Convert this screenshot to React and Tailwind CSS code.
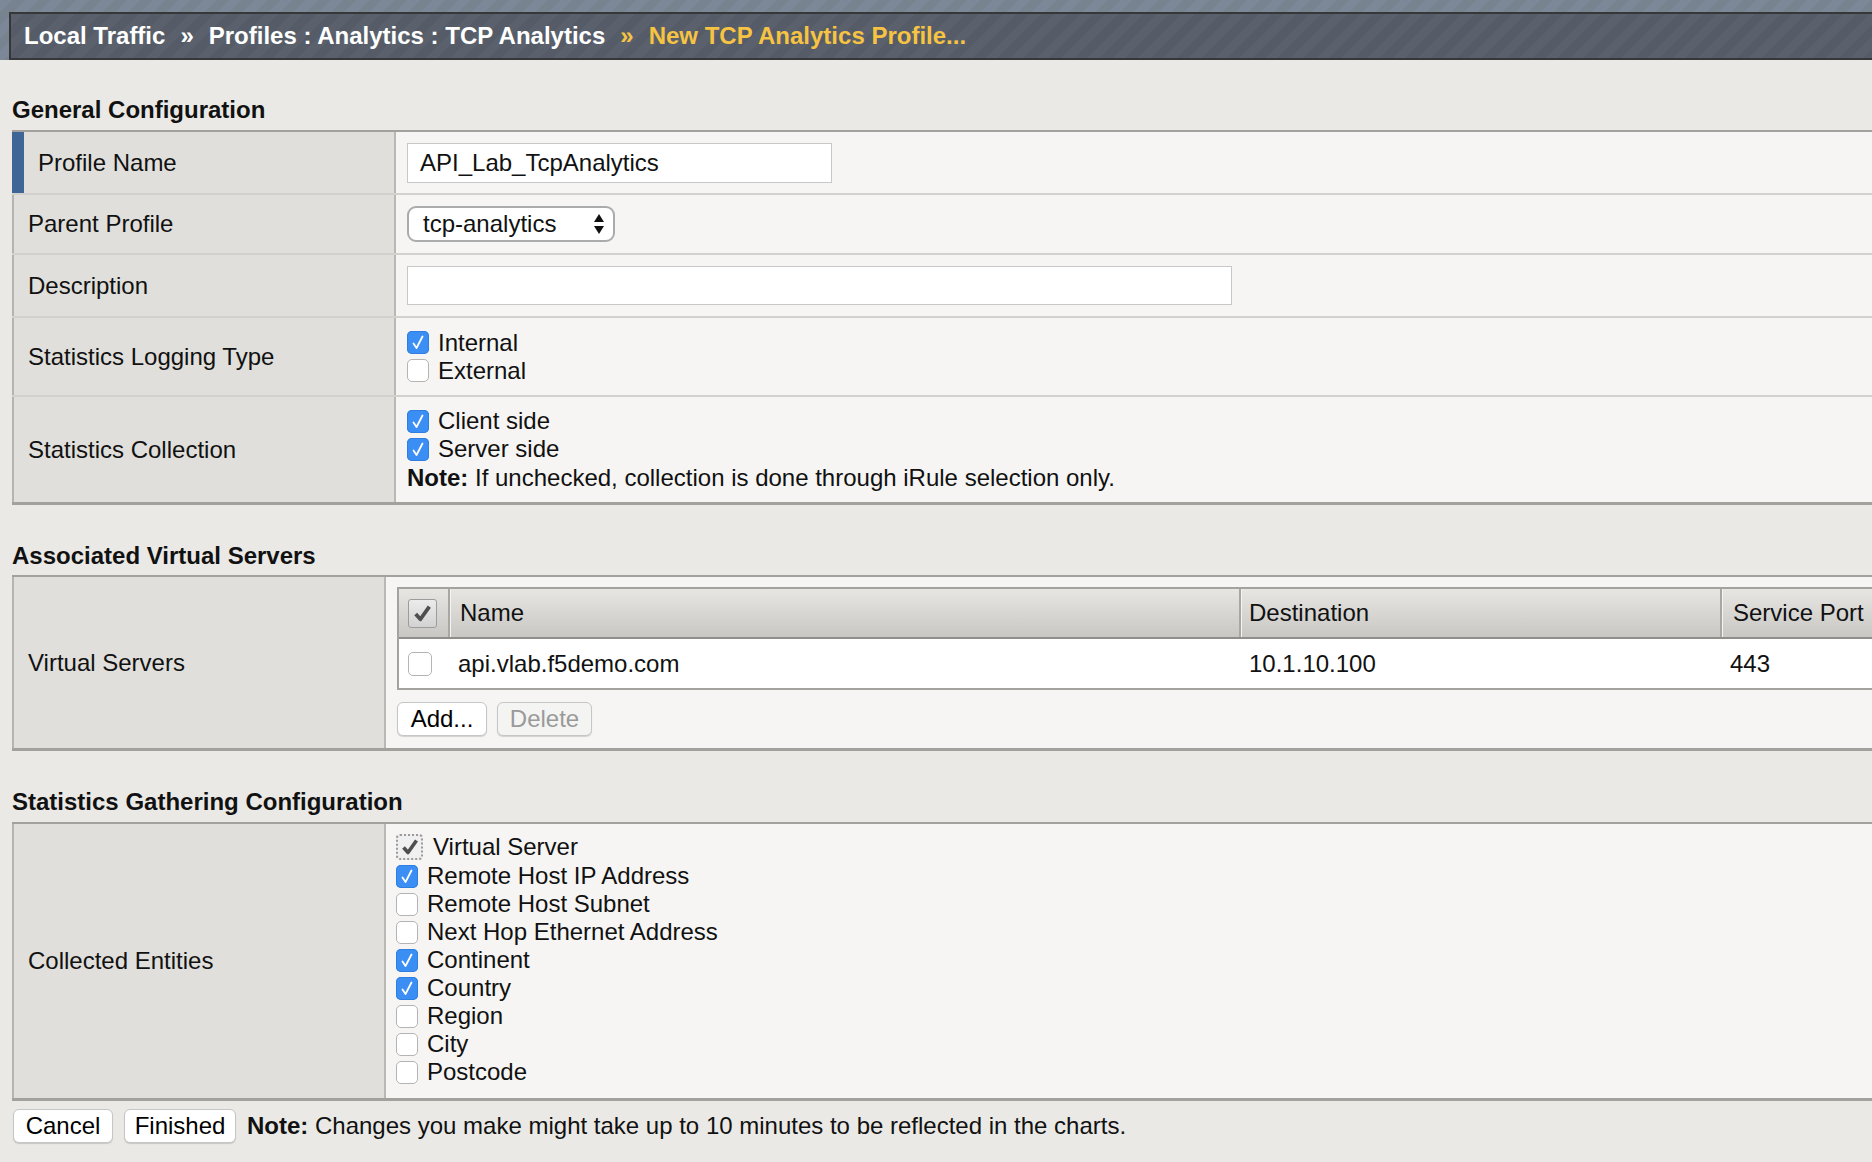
import React from 'react';

const BlueCheck = () => (
  <span className="flex h-[23px] w-[22px] shrink-0 items-center justify-center rounded-[5px] bg-[#3b8ef3] shadow-[inset_0_0_0_1px_#2f7fe0]">
    <svg viewBox="0 0 22 23" className="h-[23px] w-[22px]">
      <path d="M6.5 12.5 L9.5 17 L15.5 5.5" stroke="white" strokeWidth="1.8" fill="none" strokeLinecap="round" strokeLinejoin="round" />
    </svg>
  </span>
);

const EmptyCheck = () => (
  <span className="h-[23px] w-[22px] shrink-0 rounded-[5px] border border-[#b4b4b4] bg-white" />
);

const CheckLine = ({ checked, children }) => (
  <div className="flex h-[28px] items-center gap-[9px]">
    {checked ? <BlueCheck /> : <EmptyCheck />}
    <span>{children}</span>
  </div>
);

const GrayTick = ({ className }) => (
  <svg viewBox="0 0 20 20" className={className}>
    <path d="M3.5 10.5 L8 15.5 L16.5 3.5" stroke="#4f4f4f" strokeWidth="3.6" fill="none" strokeLinejoin="round" />
  </svg>
);

const Heading = ({ children, className }) => (
  <h2 className={`ml-[12px] font-bold text-[#111] ${className}`}>{children}</h2>
);

const Button = ({ children, className, disabled }) => (
  <button
    className={`h-[34px] rounded-[6px] border border-[#c6c6c6] text-center leading-[32px] shadow-[0_1px_1px_rgba(0,0,0,0.15)] ${
      disabled ? 'bg-[#f4f4f3] text-[#9a9a9a]' : 'bg-white text-black'
    } ${className}`}
  >
    {children}
  </button>
);

const FormRow = ({ label, height, first, children, last }) => (
  <div className={`flex ${last ? '' : 'border-b-2 border-[#d2d1cd]'}`} style={{ height }}>
    <div
      className={`flex w-[384px] shrink-0 items-center border-r-2 border-[#b9b8b4] bg-[#e0dfdb] pl-[14px] ${
        first ? 'border-l-[12px] border-l-[#3d6596]' : 'border-l-2 border-l-[#b5b4b0]'
      }`}
    >
      {label}
    </div>
    <div className="flex flex-1 items-center bg-[#f6f5f3] pl-[11px]">{children}</div>
  </div>
);

export default function App() {
  const entities = [
    ['Remote Host IP Address', true],
    ['Remote Host Subnet', false],
    ['Next Hop Ethernet Address', false],
    ['Continent', true],
    ['Country', true],
    ['Region', false],
    ['City', false],
    ['Postcode', false],
  ];

  return (
    <div className="min-h-screen bg-[#eae9e5] font-['Liberation_Sans',Arial,sans-serif] text-[24px] leading-[28px] text-[#111]">
      {/* breadcrumb bar */}
      <div className="bg-[image:repeating-linear-gradient(135deg,#7c8897_0px,#7c8897_9px,#77838f_9px,#77838f_18px)] pl-[9px] pt-[12px]">
        <div className="flex h-[48px] items-center border-y-2 border-l-2 border-[#363738] bg-[image:repeating-linear-gradient(135deg,#5a616c_0px,#5a616c_9px,#555c67_9px,#555c67_18px)] pl-[13px] font-bold text-white">
          <span>Local Traffic</span>
          <span className="mx-[15px]">»</span>
          <span>Profiles : Analytics : TCP Analytics</span>
          <span className="mx-[15px] text-[#f6c343]">»</span>
          <span className="text-[#f6c343]">New TCP Analytics Profile...</span>
        </div>
      </div>

      {/* General Configuration */}
      <Heading className="mt-[36px] mb-[6px]">General Configuration</Heading>
      <div className="ml-[12px] border-t-2 border-b-[3px] border-[#a2a19d]">
        <FormRow label="Profile Name" height={63} first>
          <div className="flex h-[40px] w-[425px] items-center border border-[#c8c8c8] bg-white pl-[12px]">
            API_Lab_TcpAnalytics
          </div>
        </FormRow>
        <FormRow label="Parent Profile" height={60}>
          <div className="flex h-[36px] w-[208px] items-center justify-between rounded-[9px] border-2 border-[#ababab] bg-white pl-[14px] pr-[8px]">
            <span>tcp-analytics</span>
            <svg viewBox="0 0 12 22" className="h-[22px] w-[12px]">
              <path d="M6 1 L11 9 L1 9 Z" fill="#111" />
              <path d="M1 13 L11 13 L6 21 Z" fill="#111" />
            </svg>
          </div>
        </FormRow>
        <FormRow label="Description" height={63}>
          <div className="h-[39px] w-[825px] border border-[#c8c8c8] bg-white" />
        </FormRow>
        <FormRow label="Statistics Logging Type" height={79}>
          <div>
            <CheckLine checked>Internal</CheckLine>
            <CheckLine>External</CheckLine>
          </div>
        </FormRow>
        <FormRow label="Statistics Collection" height={105} last>
          <div>
            <CheckLine checked>Client side</CheckLine>
            <CheckLine checked>Server side</CheckLine>
            <div className="h-[29px] leading-[29px]">
              <b>Note:</b> If unchecked, collection is done through iRule selection only.
            </div>
          </div>
        </FormRow>
      </div>

      {/* Associated Virtual Servers */}
      <Heading className="mt-[37px] mb-[5px]">Associated Virtual Servers</Heading>
      <div className="ml-[12px] flex border-t-2 border-b-[3px] border-[#a2a19d]">
        <div className="flex w-[374px] shrink-0 items-center border-l-2 border-r-2 border-l-[#b5b4b0] border-r-[#b9b8b4] bg-[#e0dfdb] pl-[14px]">
          Virtual Servers
        </div>
        <div className="flex-1 bg-[#f6f5f3] pb-[12px] pl-[11px] pt-[10px]">
          <div className="border-y-2 border-l-2 border-[#a3a29f]">
            <div className="flex h-[50px] items-center border-b-2 border-[#8f8e8b] bg-gradient-to-b from-[#e7e6e3] to-[#c8c7c4]">
              <div className="flex h-full w-[49px] items-center pl-[9px]">
                <span className="flex h-[29px] w-[29px] items-center justify-center rounded-[3px] border border-[#9c9c9c] bg-gradient-to-b from-[#ececec] to-[#d2d2d2]">
                  <GrayTick className="h-[21px] w-[21px]" />
                </span>
              </div>
              <div className="flex h-full w-[791px] items-center border-l-2 border-[#a8a7a4] pl-[10px] shadow-[inset_1px_0_0_#f4f4f2]">Name</div>
              <div className="flex h-full w-[481px] items-center border-l-2 border-[#a8a7a4] pl-[8px] shadow-[inset_1px_0_0_#f4f4f2]">Destination</div>
              <div className="flex h-full flex-1 items-center border-l-2 border-[#a8a7a4] pl-[11px] shadow-[inset_1px_0_0_#f4f4f2]">Service Port</div>
            </div>
            <div className="flex h-[49px] items-center bg-white">
              <div className="w-[49px] pl-[9px]">
                <span className="block h-[24px] w-[24px] rounded-[5px] border border-[#b4b4b4] bg-white" />
              </div>
              <div className="w-[791px] pl-[10px]">api.vlab.f5demo.com</div>
              <div className="w-[481px] pl-[10px]">10.1.10.100</div>
              <div className="flex-1 pl-[10px]">443</div>
            </div>
          </div>
          <div className="mt-[12px] flex gap-[10px]">
            <Button className="w-[90px]">Add...</Button>
            <Button className="w-[95px]" disabled>Delete</Button>
          </div>
        </div>
      </div>

      {/* Statistics Gathering Configuration */}
      <Heading className="mt-[37px] mb-[6px]">Statistics Gathering Configuration</Heading>
      <div className="ml-[12px] flex border-t-2 border-b-[3px] border-[#a2a19d]">
        <div className="flex w-[374px] shrink-0 items-center border-l-2 border-r-2 border-l-[#b5b4b0] border-r-[#b9b8b4] bg-[#e0dfdb] pl-[14px]">
          Collected Entities
        </div>
        <div className="flex-1 bg-[#f6f5f3] pb-[12px] pt-[8px] pl-[10px]">
          <div className="flex h-[30px] items-center gap-[10px]">
            <span className="flex h-[26px] w-[27px] items-center justify-center rounded-[4px] border-2 border-dotted border-[#9a9a9a] bg-[#f0f0f0]">
              <GrayTick className="h-[20px] w-[20px]" />
            </span>
            <span>Virtual Server</span>
          </div>
          {entities.map(([name, checked]) => (
            <CheckLine key={name} checked={checked}>
              {name}
            </CheckLine>
          ))}
        </div>
      </div>

      {/* footer */}
      <div className="ml-[13px] mt-[8px] flex items-center gap-[11px] pb-[20px]">
        <Button className="w-[100px]">Cancel</Button>
        <Button className="w-[112px]">Finished</Button>
        <span>
          <b>Note:</b> Changes you make might take up to 10 minutes to be reflected in the charts.
        </span>
      </div>
    </div>
  );
}
